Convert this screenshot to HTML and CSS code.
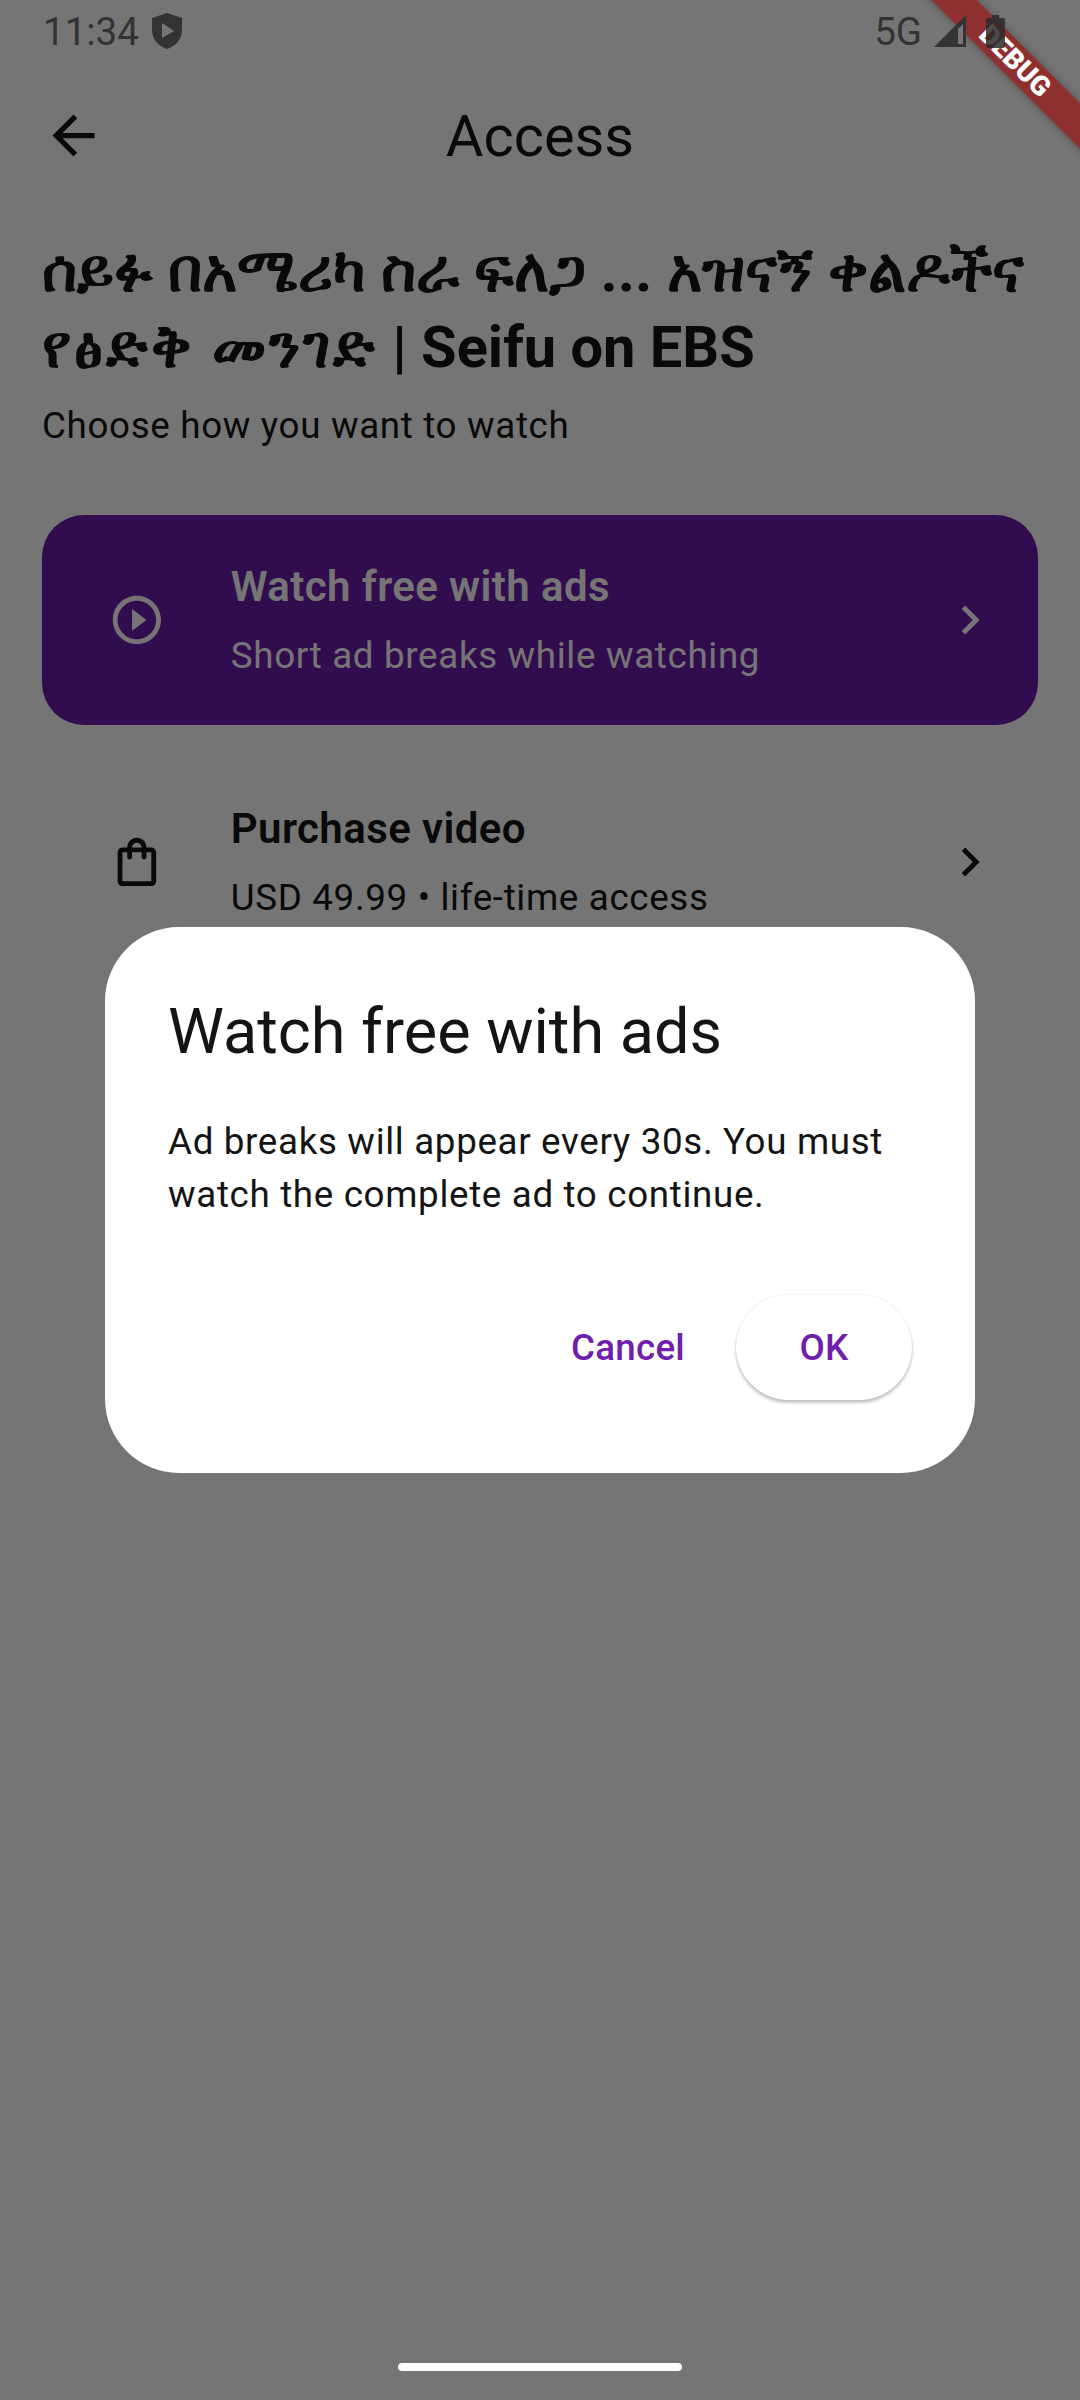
FILE: index.html
```html
<!DOCTYPE html>
<html lang="en">
<head>
  <meta charset="UTF-8" />
  <meta name="viewport" content="width=device-width, initial-scale=1.0" />
  <title>Access</title>
  <link rel="stylesheet" href="styles.css">
</head>
<body>
  <div class="screen">
    <div class="status-bar">
      <div class="status-left">
        <span>11:34</span>
        <svg class="shield" viewBox="0 0 30 36"><path d="M15 0 30 5V17C30 26 24 33 15 36 6 33 0 26 0 17V5Z" fill="#333"/><path d="M10 10 22 18 10 25Z" fill="#767676"/></svg>
      </div>
      <div class="status-right">
        <span>5G</span>
        <svg class="signal" viewBox="0 0 32 32"><path d="M32 0V32H0Z" fill="#333"/><path d="M24 14V29H29V9Z" fill="#767676"/></svg>
        <svg class="battery" viewBox="0 0 19 33"><path d="M6 0H13V3H17Q19 3 19 5V31Q19 33 17 33H2Q0 33 0 31V5Q0 3 2 3H6Z" fill="#2a2a2a" fill-opacity=".85"/></svg>
      </div>
    </div>

    <div class="app-bar">
      <svg class="icon" viewBox="0 0 24 24"><path d="M20 11H7.83l5.59-5.59L12 4l-8 8 8 8 1.41-1.41L7.83 13H20v-2z"/></svg>
      <div class="app-title">Access</div>
      <div class="icon"></div>
    </div>

    <main class="content">
      <h1 class="video-title">
        <span class="title-line ethiopic">ሰይፉ በአሜሪካ ስራ ፍለጋ ... አዝናኝ ቀልዶችና</span>
        <span class="title-line"><span class="ethiopic ethiopic-wide">የፅድቅ መንገድ</span> | Seifu on EBS</span>
      </h1>
      <p class="subtitle">Choose how you want to watch</p>

      <div class="option option-selected">
        <svg class="option-icon" viewBox="0 0 24 24"><path d="M10 16.5l6-4.5-6-4.5v9zM12 2C6.48 2 2 6.48 2 12s4.48 10 10 10 10-4.48 10-10S17.52 2 12 2zm0 18c-4.41 0-8-3.59-8-8s3.59-8 8-8 8 3.59 8 8-3.59 8-8 8z"/></svg>
        <div class="option-text">
          <div class="option-name">Watch free with ads</div>
          <div class="option-desc">Short ad breaks while watching</div>
        </div>
        <svg class="chevron" viewBox="0 0 24 24"><path d="M10 6L8.59 7.41 13.17 12l-4.58 4.59L10 18l6-6z"/></svg>
      </div>

      <div class="option">
        <svg class="option-icon" viewBox="0 0 24 24"><path d="M18 6h-2c0-2.21-1.79-4-4-4S8 3.79 8 6H6c-1.1 0-2 .9-2 2v12c0 1.1.9 2 2 2h12c1.1 0 2-.9 2-2V8c0-1.1-.9-2-2-2zm-6-2c1.1 0 2 .9 2 2h-4c0-1.1.9-2 2-2zm6 16H6V8h2v2c0 .55.45 1 1 1s1-.45 1-1V8h4v2c0 .55.45 1 1 1s1-.45 1-1V8h2v12z"/></svg>
        <div class="option-text">
          <div class="option-name">Purchase video</div>
          <div class="option-desc">USD 49.99 • life-time access</div>
        </div>
        <svg class="chevron" viewBox="0 0 24 24"><path d="M10 6L8.59 7.41 13.17 12l-4.58 4.59L10 18l6-6z"/></svg>
      </div>
    </main>

    <div class="scrim">
      <div class="dialog">
        <h2 class="dialog-title">Watch free with ads</h2>
        <p class="dialog-body">Ad breaks will appear every 30s. You must watch the complete ad to continue.</p>
        <div class="dialog-actions">
          <button class="btn">Cancel</button>
          <button class="btn btn-raised">OK</button>
        </div>
      </div>
    </div>

    <div class="home-bar"></div>
    <div class="debug-banner">DEBUG</div>
  </div>
</body>
</html>
```

FILE: styles.css
```css
* {
  box-sizing: border-box;
}
body {
  margin: 0;
  font-family: Roboto, "Noto Sans", "DejaVu Sans", sans-serif;
  background: #fff;
}
.screen {
  position: relative;
  width: 1080px;
  height: 2400px;
  overflow: hidden;
  background: #fff;
  color: #141414;
}

/* status bar sits above the scrim and the ribbon */
.status-bar {
  position: relative;
  z-index: 3;
  height: 62px;
  padding: 0 75px 0 43px;
  display: flex;
  justify-content: space-between;
  align-items: center;
  font-size: 38.5px;
  color: #333;
}
.status-left, .status-right {
  display: flex;
  align-items: center;
}
.shield {
  width: 30px;
  height: 36px;
  margin-left: 13px;
}
.signal {
  width: 32px;
  height: 32px;
  margin-left: 12px;
}
.battery {
  width: 19px;
  height: 33px;
  margin-left: 20px;
}

/* app bar */
.app-bar {
  height: 147px;
  padding: 0 42px;
  display: flex;
  justify-content: space-between;
  align-items: center;
}
.app-title {
  font-size: 57.75px;
}
.icon {
  width: 63px;
  height: 63px;
  flex: none;
  fill: currentColor;
}

.content {
  padding: 0 42px;
}
.video-title {
  margin: 24px 0 0;
  font-size: 57.75px;
  line-height: 76px;
  font-weight: 700;
}
.title-line {
  display: block;
}
.ethiopic {
  font-size: 59.75px;
}
.ethiopic-wide {
  letter-spacing: 3px;
}
.subtitle {
  margin: 15px 0 0;
  font-size: 36.75px;
  line-height: 52px;
  letter-spacing: .66px;
}

.option {
  height: 210px;
  margin-bottom: 32px;
  padding: 0 39px 0 66px;
  border-radius: 42px;
  display: flex;
  align-items: center;
  gap: 65px;
}
.option-selected {
  margin-top: 63px;
  background: #6b1cac;
  color: #fff;
}
.option-icon {
  width: 57.75px;
  height: 57.75px;
  flex: none;
  fill: currentColor;
}
.chevron {
  width: 58px;
  height: 58px;
  flex: none;
  fill: currentColor;
}
.option-text {
  flex: 1;
}
.option-name {
  font-size: 42px;
  line-height: 56px;
  font-weight: 600;
  letter-spacing: .4px;
}
.option-desc {
  margin-top: 15px;
  font-size: 36.75px;
  line-height: 52px;
  letter-spacing: .66px;
}

/* dialog */
.scrim {
  position: absolute;
  inset: 0;
  background: rgba(0, 0, 0, .54);
  display: flex;
  align-items: center;
  justify-content: center;
}
.dialog {
  width: 870px;
  padding: 63px;
  border-radius: 74px;
  background: #fff;
}
.dialog-title {
  margin: 0;
  font-size: 63px;
  line-height: 84px;
  font-weight: 400;
  color: #141414;
}
.dialog-body {
  margin: 42px 0 0;
  font-size: 36.75px;
  line-height: 52.5px;
  letter-spacing: .66px;
  color: #141414;
}
.dialog-actions {
  margin-top: 63px;
  height: 126px;
  display: flex;
  justify-content: flex-end;
  align-items: center;
  gap: 9px;
}
.btn {
  height: 105px;
  padding: 0 42px;
  min-width: 176px;
  border: none;
  border-radius: 53px;
  background: #fff;
  font-family: inherit;
  font-size: 36.75px;
  font-weight: 500;
  letter-spacing: .26px;
  color: #6f1eae;
}
.btn-raised {
  box-shadow: 0 3px 3px rgba(0, 0, 0, .22), 0 0 3px rgba(0, 0, 0, .1);
}

.home-bar {
  position: absolute;
  left: 398px;
  bottom: 29px;
  width: 284px;
  height: 8px;
  border-radius: 4px;
  background: #fff;
}

/* flutter debug ribbon */
.debug-banner {
  position: absolute;
  z-index: 2;
  left: 855px;
  top: 44.5px;
  width: 320px;
  height: 32px;
  transform: rotate(45deg);
  background: #8f3030;
  box-shadow: 0 0 8px rgba(0, 0, 0, .3);
  color: #fff;
  font-size: 27.5px;
  line-height: 32px;
  font-weight: 900;
  text-align: center;
}
```
